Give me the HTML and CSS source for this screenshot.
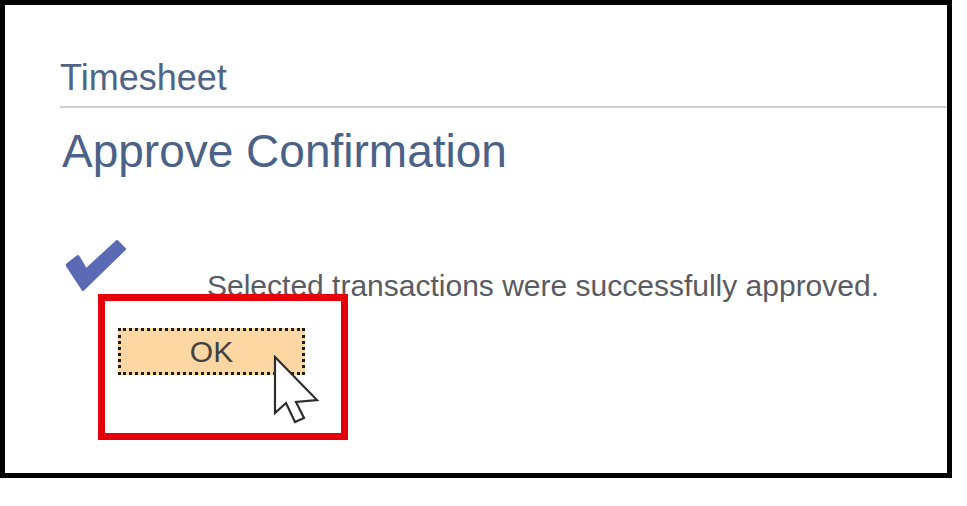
FILE: index.html
```html
<!DOCTYPE html>
<html lang="en">
<head>
<meta charset="utf-8">
<title>Approve Confirmation</title>
<link rel="stylesheet" href="styles.css">
</head>
<body>
  <div class="frame">
    <div class="page">
      <h2 class="crumb">Timesheet</h2>
      <h1 class="title">Approve Confirmation</h1>

      <div class="message">
        <svg class="check" width="60" height="52" viewBox="0 0 60 52" aria-hidden="true">
          <path d="M1 25 L12 16.5 L20 30 L51 1.5 L58.5 9 L17 49.5 Z" fill="#5a6ab5" stroke="#5a6ab5" stroke-width="3" stroke-linejoin="round"/>
        </svg>
        <p class="message-text">Selected transactions were successfully approved.</p>
      </div>

      <div class="actions">
        <button class="btn-ok" type="button">OK</button>
        <div class="callout"></div>
        <svg class="pointer" width="48" height="72" viewBox="-2 -2 48 72" aria-hidden="true">
          <path d="M0 0 L0 56 L11 46 L20 65 L29 61 L21 45 L42 43 Z" fill="#ffffff" stroke="#2d2d2d" stroke-width="2.2" stroke-linejoin="miter"/>
        </svg>
      </div>
    </div>
  </div>
</body>
</html>
```

FILE: styles.css
```css
html, body {
  margin: 0;
  padding: 0;
  background: #ffffff;
}

body {
  font-family: "Liberation Sans", Arial, sans-serif;
}

.frame {
  box-sizing: border-box;
  width: 952px;
  height: 478px;
  border: 5px solid #000000;
  background: #ffffff;
}

.page {
  padding: 53px 0 0 55px;
}

.crumb {
  margin: 0;
  padding-bottom: 8px;
  border-bottom: 2px solid #cfcfd2;
  font-size: 36px;
  line-height: 40px;
  font-weight: normal;
  color: #4f6487;
}

.title {
  margin: 17px 0 0 2px;
  font-size: 46px;
  line-height: 52px;
  font-weight: normal;
  color: #4b6187;
}

.message {
  display: flex;
  align-items: flex-start;
  margin-top: 63px;
}

.check {
  display: block;
  margin-left: 6px;
}

.message-text {
  margin: 29px 0 0 81px;
  font-size: 30px;
  line-height: 34px;
  color: #595b62;
}

.actions {
  position: relative;
  width: 187px;
  margin: 25px 0 0 58px;
}

.btn-ok {
  display: flex;
  align-items: center;
  justify-content: center;
  box-sizing: border-box;
  width: 187px;
  height: 47px;
  padding: 0;
  border: 3px dotted #1a1a1a;
  background: #fcd7a1;
  font-family: "Liberation Sans", Arial, sans-serif;
  font-size: 30px;
  color: #414141;
}

/* red highlight drawn around the OK button */
.callout {
  position: absolute;
  left: -20px;
  top: -34px;
  box-sizing: border-box;
  width: 250px;
  height: 146px;
  border: 7px solid #e6000a;
}

.pointer {
  position: absolute;
  left: 155px;
  top: 27px;
}
```
